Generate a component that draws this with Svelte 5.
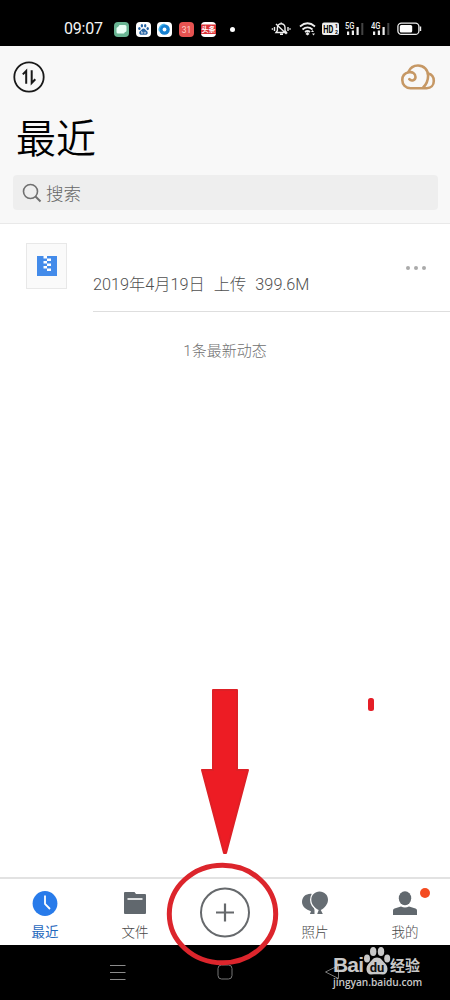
<script>
  const bars = [{ label: '5G' }, { label: '4G' }];
  const tabs = [
    { id: 'recent', label: '最近' },
    { id: 'files', label: '文件' },
    { id: 'add', label: '' },
    { id: 'photos', label: '照片' },
    { id: 'me', label: '我的' }
  ];
  let active = $state('recent');
</script>

<div class="screen">
  <div class="status">
    <span class="time">09:07</span>
    <div class="apps">
      <svg width="15" height="15" viewBox="0 0 15 15"><rect width="15" height="15" rx="4" fill="#69b593" /><path d="M5.500 3h5.500q1.500 0 1.500 1.500v4q0 1.500-1.500 1.500l-1 1.500H4q-1.500 0-1.500-1.500V6.500q0-1.500 1.500-1.500z" fill="#e9fff5" /></svg>
      <svg width="15" height="15" viewBox="0 0 15 15"><rect width="15" height="15" rx="4" fill="#fff" /><g fill="#2866a6"><ellipse cx="3.400" cy="6.500" rx="1.200" ry="1.600" /><ellipse cx="5.900" cy="3.800" rx="1.200" ry="1.700" /><ellipse cx="9.200" cy="3.800" rx="1.200" ry="1.700" /><ellipse cx="11.700" cy="6.600" rx="1.200" ry="1.600" /><path d="M7.500 6.500c1.600 0 2 1.500 3.300 2.600 1.900 1.700.7 4-1.300 3.700-1.500-.2-2.500-.2-4 0-2 .3-3.200-2-1.300-3.700C5.500 8 6 6.500 7.500 6.500z" /></g><path d="M5.500 9v2.300h1.200V9.800m1.600 0v1.500h1.300V9.800" fill="none" stroke="#fff" stroke-width=".6" /></svg>
      <svg width="15" height="15" viewBox="0 0 15 15"><rect width="15" height="15" rx="4" fill="#fff" /><circle cx="7.500" cy="7.500" r="5.300" fill="#1681d2" /><path d="M2.500 9a5.300 5.300 0 0 1 5-6.800" fill="none" stroke="#42b3ed" stroke-width="1.400" /><circle cx="7.500" cy="7.500" r="1.900" fill="#fff" /></svg>
      <svg width="15" height="15" viewBox="0 0 15 15"><rect width="15" height="15" rx="4" fill="#e65351" /><text x="7.500" y="10.500" text-anchor="middle" font-size="8.500" fill="#ffd1c9">31</text></svg>
      <svg width="15" height="15" viewBox="0 0 15 15"><rect width="15" height="15" rx="4" fill="#fff" /><rect y="2.500" width="15" height="9.500" fill="#dc3137" /><text x="7.500" y="10" text-anchor="middle" font-size="7" font-weight="700" fill="#fff">头条</text></svg>
    </div>
    <i class="dot"></i>
    <div class="system">
      <svg width="20" height="16" viewBox="0 0 20 16" fill="none" stroke="#eee" stroke-width="1.400"><path d="M5 11.500h10.500L14 9.500V6.500a3.800 3.800 0 0 0-7.600 0v3zM9 13.200h3M10.200 1.500v1M5 3l10.500 10M3.500 6v4M17 6v4M1.400 7.200v1.600M19 7.200v1.600" /></svg>
      <svg class="wifi" width="18" height="16" viewBox="0 0 18 16" fill="none" stroke="#eee" stroke-width="1.700"><path d="M1 5.500q7.500-6.500 15 0M3.500 8.500q5-4.300 10 0M6 11q2.500-2 5 0" /><path d="M8.500 11l2 2-2 1.500-2-1.500z" fill="#eee" stroke="none" /><path d="M12 11l1.500-2 1.500 2zM13 12.500h3L14.500 14.500z" fill="#eee" stroke="none" /></svg>
      <svg class="hd" width="17" height="14" viewBox="0 0 17 14"><rect y=".5" width="17" height="12.500" rx="2" fill="#eee" /><text x="1.300" y="10.500" font-size="10" font-weight="700" textLength="10" lengthAdjust="spacingAndGlyphs">HD</text><text x="13" y="6" font-size="5" font-weight="700">1</text><text x="13" y="12" font-size="5" font-weight="700">2</text></svg>
      {#each bars as b}
        <svg class="signal" width="20" height="16" viewBox="0 0 20 16" fill="#eee"><text x="0" y="7.500" font-size="9" font-weight="500" textLength="9.500" lengthAdjust="spacingAndGlyphs">{b.label}</text><path d="M2 10.500h2.200V14H2zM6.800 9.500H9V14H6.800zM11.500 6h2.200v8h-2.200z" /><path d="M16.300 2h2v12h-2z" fill="#444" /></svg>
      {/each}
      <svg class="battery" width="25" height="14" viewBox="0 0 25 14"><rect x=".9" y="1.100" width="21" height="11.300" rx="3.500" fill="none" stroke="#eee" stroke-width="1.300" /><rect x="2.800" y="3" width="12.400" height="7.500" rx="1.500" fill="#fff" /><path d="M23.500 4.500v4.500" stroke="#eee" stroke-width="1.400" /></svg>
    </div>
  </div>

  <header>
    <div class="actions">
      <svg width="32" height="32" viewBox="0 0 32 32" fill="none" stroke="#191919" stroke-width="1.800"><circle cx="16" cy="16" r="14.700" /><path d="M9.800 13.400l3.400-3.400v12.800M18.700 9.200v12.800l3.600-3.700" stroke-width="2" /></svg>
      <svg width="36" height="28" viewBox="0 0 36 28" fill="none" stroke="#c69865" stroke-width="2.600" stroke-linecap="round"><path d="M9.300 16.200c2.200 2.600 6.200.9 6.200-2.300 0-3.500-3.300-5.400-6.800-4.600C4.600 10.200 2.300 13.300 2.300 17c0 4.800 3.400 8.200 8.200 8.200h16.200c4.200 0 7.100-3 7.100-7.200 0-3.800-2.200-6.600-5.700-7.400" /><path d="M8.500 8.800C10.300 4.600 13.800 2.500 18 2.500c5.800 0 10.100 4.400 10.100 10.200 0 5.200-2 8.800-4.900 11.800" /></svg>
    </div>
    <h1>最近</h1>
    <div class="search">
      <svg width="20" height="20" viewBox="0 0 20 20" fill="none" stroke="#707070" stroke-width="1.600"><circle cx="8.500" cy="8.500" r="7" /><path d="M13.500 13.500l5 5" stroke-width="2" /></svg>
      <span>搜索</span>
    </div>
  </header>

  <main>
    <div class="file">
      <div class="thumb">
        <svg width="20" height="20" viewBox="0 0 20 20"><path d="M0 0h20v20H0z" fill="#438bea" /><path d="M6.500 0h3.500v2.500H6.500zM10 2.500h4V5h-4zM6.500 5H10v2.500H6.500zM10 7.500h4V10h-4zM6.500 10H10v2.500H6.500zM10 12.500h4V15h-4z" fill="#fff" /></svg>
      </div>
      <div class="info">
        <span class="meta"><span>2019年4月19日</span><span>上传</span><span>399.6M</span></span>
        <span class="more"><i></i><i></i><i></i></span>
      </div>
    </div>
    <p>1条最新动态</p>
  </main>

  <nav class="tabs">
    {#each tabs as t}
      <button class:active={active === t.id} class:add={t.id === 'add'} aria-label={t.label || '+'} onclick={() => { if (t.label) active = t.id; }}>
        {#if t.id === 'recent'}
          <svg width="26" height="26" viewBox="0 0 26 26"><circle cx="13" cy="13.500" r="12.400" fill="#287bea" /><path d="M13 5.500v8.500l5 5" fill="none" stroke="#fff" stroke-width="1.800" /></svg>
        {:else if t.id === 'files'}
          <svg width="26" height="26" viewBox="0 0 26 26"><path d="M3 2h9.500l1.500 2h9q1 0 1 1v18q0 1-1 1H3q-1 0-1-1V3q0-1 1-1z" fill="#61686e" /><path d="M5.500 9h15" stroke="#fff" stroke-width="1.600" /></svg>
        {:else if t.id === 'add'}
          <svg width="52" height="52" viewBox="0 0 52 52" fill="none" stroke="#66696c" stroke-width="2"><circle cx="26" cy="26.500" r="24" /><path d="M17 26.500h18M26 17.500v18" stroke-width="2.200" /></svg>
        {:else if t.id === 'photos'}
          <svg width="28" height="26" viewBox="0 0 28 26" fill="#666d73"><path d="M10.500 3.800C5 3.300 1 7 1 12c0 4.200 4 7.800 9 9.200l-1.100 2.800h4.600v-4z" /><path d="M18.500 1.500c5 0 8.500 3.600 8.500 8.300 0 4.300-3.300 8.300-7.200 10.300l2 4h-5.600l1.500-4c-4-2-7.400-5.900-7.400-10.300 0-4.700 3.500-8.300 8.200-8.300z" stroke="#fff" stroke-width="2.600" paint-order="stroke" /></svg>
        {:else}
          <svg width="26" height="26" viewBox="0 0 26 26" fill="#61686e"><ellipse cx="13" cy="8.200" rx="6.200" ry="7" /><path d="M1 25v-4.500q0-1.500 1.500-2L9 16.500q4 2 8 0l6.500 2q1.500.5 1.500 2V25z" /></svg>
          <i class="badge"></i>
        {/if}
        {#if t.label}<span>{t.label}</span>{/if}
      </button>
    {/each}
  </nav>

  <div class="system-nav">
    <svg width="16" height="16" viewBox="0 0 16 16" stroke="#8b8b8b"><path d="M0 1.500h15.500M0 8.500h15.500M0 15.500h15.500" /></svg>
    <svg width="16" height="16" viewBox="0 0 16 16"><rect x="1" y="1" width="14" height="14" rx="3.500" fill="none" stroke="#777" /></svg>
    <svg width="16" height="16" viewBox="0 0 16 16"><path d="M14.500 1.500v13L1.500 8z" fill="none" stroke="#777" /></svg>
  </div>

  <svg class="marks" width="450" height="1000" viewBox="0 0 450 1000">
    <path d="M213 690h24v80h11l-22 83h-2l-22-83h11z" fill="#ed1c24" stroke="#de2026" stroke-width="2" stroke-linejoin="round" />
    <rect x="368" y="698" width="6" height="13" rx="2.500" fill="#e51e27" />
    <ellipse cx="222.500" cy="914" rx="53.200" ry="48.800" fill="none" stroke="#dc252c" stroke-width="5" />
  </svg>

  <div class="watermark">
    <div class="brand">
      <span class="bai">Bai</span>
      <svg width="28" height="30" viewBox="0 0 28 30"><g fill="#c8c8c8"><ellipse cx="4" cy="12.500" rx="3" ry="4" /><ellipse cx="10.200" cy="5.500" rx="3.200" ry="4.500" /><ellipse cx="18" cy="5.500" rx="3.200" ry="4.500" /><ellipse cx="24.200" cy="12.500" rx="3" ry="4" /><path d="M14 11.500c4 0 5 3 7.700 5.500 4.800 4.300 3 11.800-2 11.500-3.700-.3-7.700-.3-11.400 0-5 .3-6.800-7.200-2-11.500C9 14.500 10 11.500 14 11.500z" /></g><text x="14" y="26" text-anchor="middle" font-size="13" font-weight="700" fill="#111">du</text></svg>
      <span class="exp">经验</span>
    </div>
    <span class="site">jingyan.baidu.com</span>
  </div>
</div>

<style>
  :global(body) { margin: 0; }
  .screen { position: relative; width: 450px; height: 1000px; display: flex; flex-direction: column; overflow: hidden; background: #fff; font-family: Roboto, "Noto Sans CJK SC", sans-serif; color: #666; }
  svg { display: block; flex: none; }
  .status { height: 46px; flex: none; box-sizing: border-box; display: flex; align-items: center; background: #000; padding: 12px 28px 0 64px; }
  .time { width: 50px; font-size: 16px; letter-spacing: -.2px; color: #f5f5f5; line-height: 18px; }
  .apps { display: flex; gap: 6.700px; }
  .dot { width: 5px; height: 5px; border-radius: 50%; background: #fff; margin-left: 14px; }
  .system { display: flex; align-items: center; margin-left: auto; }
  .wifi { margin-left: 8px; }
  .hd { margin-left: 5px; }
  .signal { margin-left: 6px; }
  .battery { margin-left: 6px; }
  header { box-sizing: border-box; height: 178px; flex: none; padding: 15px 12px 0; background: #f8f8f8; border-bottom: 1px solid #e9e9e9; }
  .actions { display: flex; justify-content: space-between; align-items: center; padding: 0 2px 0 1px; }
  h1 { margin: 15px 0 0 4px; color: #000; font-weight: 350; font-size: 40px; line-height: 64px; height: 64px; }
  .search { margin: 3px 0 0 1px; height: 35px; border-radius: 4px; background: #eee; display: flex; align-items: center; gap: 4px; padding-left: 9px; font-size: 17.500px; font-weight: 300; }
  main { flex: 1; }
  .file { display: flex; height: 88px; }
  .thumb { box-sizing: border-box; width: 41px; height: 46px; margin: 19px 26px 0 26px; display: grid; place-items: center; border: 1px solid #e8e8e8; background: #fafafa; }
  .info { flex: 1; box-sizing: border-box; display: flex; justify-content: space-between; border-bottom: 1px solid #dedede; padding: 49px 24px 0 0; }
  .meta { display: flex; gap: 9px; font-size: 16.250px; line-height: 24px; font-weight: 300; color: #505050; white-space: nowrap; }
  .more { display: flex; gap: 4px; margin-top: -7px; }
  .more i { width: 4px; height: 4px; border-radius: 50%; background: #aaa; }
  p { margin: 28px 0 0; text-align: center; font-size: 15px; font-weight: 300; line-height: 22px; color: #707070; }
  .tabs { box-sizing: border-box; height: 68px; flex: none; border-top: 2px solid #e2e2e2; display: grid; grid-template-columns: repeat(5, 1fr); }
  button { position: relative; border: 0; padding: 11px 0 0; background: none; display: flex; flex-direction: column; align-items: center; font: 300 13.500px/20px Roboto, "Noto Sans CJK SC", sans-serif; color: #484848; }
  button span { margin-top: 6px; }
  button.active span { color: #1f68bd; font-weight: 400; }
  button.add { padding-top: 7px; }
  .badge { position: absolute; right: 20px; top: 9px; width: 10px; height: 10px; border-radius: 50%; background: #f44b20; }
  .system-nav { height: 55px; flex: none; box-sizing: border-box; background: #000; display: flex; justify-content: space-between; padding: 19px 110px 0; }
  .marks { position: absolute; left: 0; top: 0; pointer-events: none; }
  .watermark { position: absolute; left: 333px; top: 946px; width: 92px; color: #c8c8c8; }
  .brand { display: flex; align-items: flex-end; height: 30px; }
  .bai { width: 30px; font: 700 21px/22px "Liberation Sans", sans-serif; letter-spacing: -.8px; }
  .exp { margin-left: -1px; font-size: 15px; line-height: 20px; font-weight: 700; }
  .site { display: block; font: 600 10.200px/12px "Open Sans", sans-serif; letter-spacing: -.05px; white-space: nowrap; }
</style>
